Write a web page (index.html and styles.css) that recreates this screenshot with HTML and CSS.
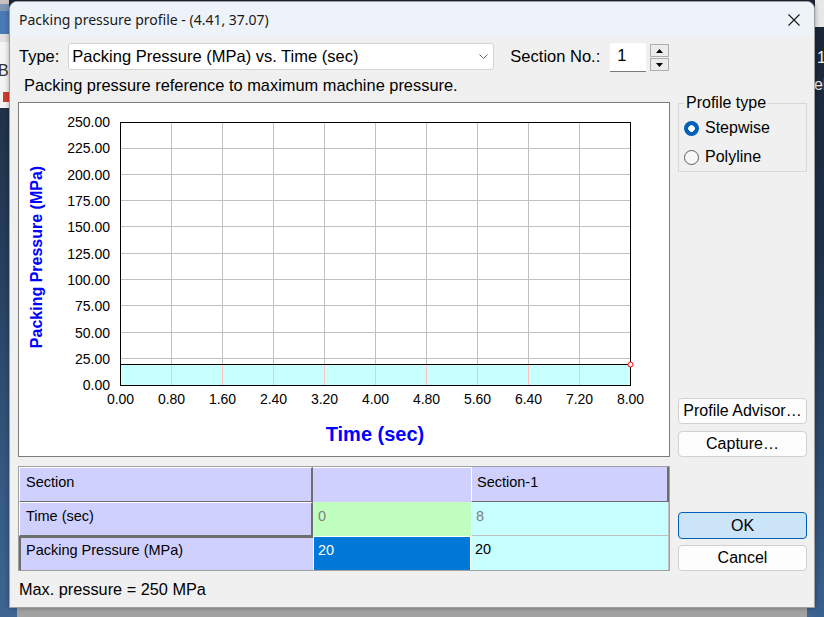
FILE: index.html
```html
<!DOCTYPE html>
<html>
<head>
<meta charset="utf-8">
<link rel="stylesheet" href="styles.css">
</head>
<body>
<div class="bg-lt"><span class="bg-lt-text">Bo</span><span class="bg-lt-red"></span></div>
<div class="bg-rt"><span class="bg-rt-a">1</span><span class="bg-rt-b">el</span></div>
<div class="bg-bt"></div>

<div class="dlg">
  <div class="titlebar">
    <span class="title">Packing pressure profile - (4.41, 37.07)</span>
    <svg class="close" width="12" height="12" viewBox="0 0 12 12"><path d="M0.5 0.5 L11.5 11.5 M11.5 0.5 L0.5 11.5" stroke="#1a1a1a" stroke-width="1.1" fill="none"/></svg>
  </div>
  <div class="body">
    <div class="typerow">
      <span class="lbl-type">Type:</span>
      <div class="combo">
        <span>Packing Pressure (MPa) vs. Time (sec)</span>
        <svg width="9" height="5" viewBox="0 0 9 5"><path d="M0.5 0.5 L4.5 4.5 L8.5 0.5" stroke="#606060" fill="none" stroke-width="1"/></svg>
      </div>
      <span class="lbl-sec">Section No.:</span>
      <div class="spin-input">1</div>
      <div class="spin-btns">
        <div class="spin-btn"><svg width="7" height="4" viewBox="0 0 7 4"><path d="M0 4 L3.5 0 L7 4 Z" fill="#000"/></svg></div>
        <div class="spin-btn"><svg width="7" height="4" viewBox="0 0 7 4"><path d="M0 0 L7 0 L3.5 4 Z" fill="#000"/></svg></div>
      </div>
    </div>
    <div class="desc">Packing pressure reference to maximum machine pressure.</div>
    <div class="main">
      <div class="left">
        <div class="chart">
          <svg width="650" height="353" viewBox="0 0 650 353" shape-rendering="crispEdges">
            <rect x="101" y="262" width="510" height="20" fill="#c8ffff"/>
            <g stroke="#c0c0c0" stroke-width="1">
              <line x1="152.5" y1="19" x2="152.5" y2="261"/>
              <line x1="203.5" y1="19" x2="203.5" y2="261"/>
              <line x1="254.5" y1="19" x2="254.5" y2="261"/>
              <line x1="305.5" y1="19" x2="305.5" y2="261"/>
              <line x1="356.5" y1="19" x2="356.5" y2="261"/>
              <line x1="407.5" y1="19" x2="407.5" y2="261"/>
              <line x1="458.5" y1="19" x2="458.5" y2="261"/>
              <line x1="509.5" y1="19" x2="509.5" y2="261"/>
              <line x1="560.5" y1="19" x2="560.5" y2="261"/>
              <line x1="101" y1="45.5" x2="611" y2="45.5"/>
              <line x1="101" y1="71.5" x2="611" y2="71.5"/>
              <line x1="101" y1="97.5" x2="611" y2="97.5"/>
              <line x1="101" y1="123.5" x2="611" y2="123.5"/>
              <line x1="101" y1="150.5" x2="611" y2="150.5"/>
              <line x1="101" y1="176.5" x2="611" y2="176.5"/>
              <line x1="101" y1="202.5" x2="611" y2="202.5"/>
              <line x1="101" y1="229.5" x2="611" y2="229.5"/>
              <line x1="101" y1="255.5" x2="611" y2="255.5"/>
            </g>
            <g stroke="#ffc0c0" stroke-width="1">
              <line x1="152.5" y1="262" x2="152.5" y2="282"/>
              <line x1="203.5" y1="262" x2="203.5" y2="282"/>
              <line x1="254.5" y1="262" x2="254.5" y2="282"/>
              <line x1="305.5" y1="262" x2="305.5" y2="282"/>
              <line x1="356.5" y1="262" x2="356.5" y2="282"/>
              <line x1="407.5" y1="262" x2="407.5" y2="282"/>
              <line x1="458.5" y1="262" x2="458.5" y2="282"/>
              <line x1="509.5" y1="262" x2="509.5" y2="282"/>
              <line x1="560.5" y1="262" x2="560.5" y2="282"/>
            </g>
            <line x1="101" y1="261.5" x2="612" y2="261.5" stroke="#000" stroke-width="1"/>
            <rect x="101.5" y="19.5" width="510" height="263" fill="none" stroke="#000" stroke-width="1"/>
            <circle cx="611.5" cy="261.5" r="2.5" fill="#fff" stroke="#ff0000" stroke-width="1" shape-rendering="auto"/>
            <g class="ax ylab" text-anchor="end">
              <text x="91" y="24">250.00</text>
              <text x="91" y="50">225.00</text>
              <text x="91" y="77">200.00</text>
              <text x="91" y="103">175.00</text>
              <text x="91" y="129">150.00</text>
              <text x="91" y="156">125.00</text>
              <text x="91" y="182">100.00</text>
              <text x="91" y="208">75.00</text>
              <text x="91" y="235">50.00</text>
              <text x="91" y="261">25.00</text>
              <text x="91" y="287">0.00</text>
            </g>
            <g class="ax xlab" text-anchor="middle">
              <text x="101.5" y="301">0.00</text>
              <text x="152.5" y="301">0.80</text>
              <text x="203.5" y="301">1.60</text>
              <text x="254.5" y="301">2.40</text>
              <text x="305.5" y="301">3.20</text>
              <text x="356.5" y="301">4.00</text>
              <text x="407.5" y="301">4.80</text>
              <text x="458.5" y="301">5.60</text>
              <text x="509.5" y="301">6.40</text>
              <text x="560.5" y="301">7.20</text>
              <text x="611.5" y="301">8.00</text>
            </g>
            <text class="ytitle" x="0" y="0" transform="translate(23 154) rotate(-90)" text-anchor="middle">Packing Pressure (MPa)</text>
            <text class="xtitle" x="356" y="338" text-anchor="middle">Time (sec)</text>
          </svg>
        </div>
        <div class="tbl">
          <div class="c hd c11">Section</div>
          <div class="c hd c12"></div>
          <div class="c hd c13">Section-1</div>
          <div class="c hd c21">Time (sec)</div>
          <div class="c c22">0</div>
          <div class="c c23">8</div>
          <div class="c hd c31">Packing Pressure (MPa)</div>
          <div class="c c32">20</div>
          <div class="c c33">20</div>
        </div>
        <div class="maxp">Max. pressure = 250 MPa</div>
      </div>
      <div class="right">
        <div class="grp">
          <div class="grp-title">Profile type</div>
          <div class="radio r1"><span class="rb on"></span><span>Stepwise</span></div>
          <div class="radio r2"><span class="rb"></span><span>Polyline</span></div>
        </div>
        <div class="btn b-adv">Profile Advisor…</div>
        <div class="btn b-cap">Capture…</div>
        <div class="btn b-ok">OK</div>
        <div class="btn b-cancel">Cancel</div>
      </div>
    </div>
  </div>
</div>
</body>
</html>
```

FILE: styles.css
```css
* { box-sizing: border-box; }
html, body { margin: 0; padding: 0; }
body {
  width: 824px;
  height: 617px;
  overflow: hidden;
  position: relative;
  font-family: "Liberation Sans", Arial, sans-serif;
  background: linear-gradient(to bottom, #1b2838 0%, #27405f 45%, #34577f 75%, #3e6592 100%);
}

/* desktop pieces behind the dialog */
.bg-lt {
  position: absolute; left: 0; top: 0; width: 9px; height: 108px; overflow: hidden;
  background: linear-gradient(to bottom, #cbbfbf 0, #cbbfbf 4px, #7d96b6 4px, #7d96b6 11px, #4a7ab3 11px, #4a7ab3 34px, #e2e2e2 34px, #e2e2e2 42px, #f4f4f4 42px, #f4f4f4 108px);
}
.bg-lt-text { position: absolute; left: -2px; top: 62px; font-size: 16px; color: #333; }
.bg-lt-red { position: absolute; left: 3px; top: 92px; width: 8px; height: 10px; background: #d23c2c; }
.bg-rt {
  position: absolute; left: 815px; top: 0; width: 9px; height: 617px;
  background: linear-gradient(to bottom, #e8e8e8 0, #e8e8e8 27px, #1a2737 27px, #1e3046 40%, #2f4f74 80%, #3a6290 100%);
}
.bg-rt-a { position: absolute; left: 2px; top: 49px; font-size: 16px; color: #f0f0f0; }
.bg-rt-b { position: absolute; left: -1px; top: 76px; font-size: 16px; color: #f0f0f0; }
.bg-bt { position: absolute; left: 17px; top: 608px; width: 790px; height: 9px; background: #a2a2a2; }

.dlg {
  position: absolute; left: 9px; top: 1px; width: 806px; height: 607px;
  background: #f0f0f0;
  border: 1px solid #9f9f9f;
  border-radius: 8px 8px 0 0;
  box-shadow: 0 0 5px rgba(0,0,0,0.35);
  overflow: hidden;
  display: flex; flex-direction: column;
}
.titlebar {
  height: 35px; flex: none;
  background: #eef2f9;
  display: flex; align-items: center; justify-content: space-between;
  padding: 0 14px 0 9px;
  font-family: "Noto Sans", "Open Sans", sans-serif;
  font-size: 14px;
  color: #1a1a1a;
}
.close { display: block; }

.body { padding: 6px 7px 0 8px; font-size: 16px; color: #000; }

.typerow { display: flex; align-items: flex-start; height: 29px; font-size: 16.5px; }
.lbl-type { margin-left: 1px; line-height: 27px; }
.combo {
  margin-left: 9px; width: 426px; height: 27px;
  background: #fff; border: 1px solid #d3d3d3; border-radius: 3px;
  display: flex; align-items: center; justify-content: space-between;
  padding: 0 5px 0 3px;
}
.combo svg { display: block; }
.lbl-sec { margin-left: 16px; line-height: 27px; }
.spin-input {
  margin-left: 10px; width: 36px; height: 29px;
  background: #fff; border-bottom: 1px solid #7a7a7a;
  padding-left: 7px; line-height: 25px;
}
.spin-btns { margin-left: 4px; margin-top: 1px; display: flex; flex-direction: column; gap: 1px; }
.spin-btn {
  width: 19px; height: 13px; border: 1px solid #adadad; background: #ececec;
  display: flex; align-items: center; justify-content: center;
}
.spin-btn svg { display: block; }

.desc { margin-top: 4px; line-height: 18px; padding-left: 6px; font-size: 16.4px; }

.main { display: flex; gap: 8px; margin-top: 8px; }
.left { width: 652px; flex: none; }
.chart { height: 355px; background: #fff; border: 1px solid #7b7b7b; }
.chart svg { display: block; }
.ax { font-family: "Liberation Sans", Arial, sans-serif; font-size: 14px; fill: #000; }
.ytitle { font-family: "Liberation Sans", Arial, sans-serif; font-size: 16px; font-weight: bold; fill: #0000ff; }
.xtitle { font-family: "Liberation Sans", Arial, sans-serif; font-size: 20px; font-weight: bold; fill: #0000ff; }

.tbl {
  margin-top: 9px;
  border: 1px solid #a0a0a0;
  display: grid;
  grid-template-columns: 294px 158px 198px;
  grid-template-rows: 35px 34px 34px;
  font-size: 14.5px;
  background: #fff;
}
.c { padding-left: 6px; line-height: 17px; white-space: nowrap; }
.hd { background: #d0d0ff; }
.c11 { border-top: 1px solid #fff; border-left: 1px solid #fff; border-right: 2px solid #6e6e6e; border-bottom: 1px solid #6e6e6e; padding-top: 6px; }
.c12 { border-top: 1px solid #fff; padding-top: 6px; }
.c13 { border-left: 1px solid #fff; border-right: 2px solid #6e6e6e; border-bottom: 1px solid #6e6e6e; padding-top: 7px; padding-left: 5px; }
.c21 { border-top: 1px solid #fff; border-left: 1px solid #fff; border-right: 2px solid #6e6e6e; border-bottom: 1px solid #6e6e6e; padding-top: 5px; }
.c22 { background: #c0ffc0; color: #808080; padding-top: 6px; padding-left: 5px; }
.c23 { background: #c8ffff; color: #808080; border-left: 1px solid #fff; border-right: 1px solid #c0c0c0; border-bottom: 1px solid #c0c0c0; padding-top: 6px; padding-left: 4px; }
.c31 { border-top: 2px solid #6e6e6e; border-left: 2px solid #6e6e6e; padding-top: 4px; padding-left: 5px; }
.c32 { background: #0078d7; color: #fff; border-top: 1px solid #fff; border-left: 1px solid #fff; border-right: 1px solid #fff; padding-top: 5px; padding-left: 4px; }
.c33 { background: #c8ffff; border-right: 1px solid #c0c0c0; padding-top: 5px; padding-left: 4px; }

.maxp { margin-top: 9px; line-height: 18px; padding-left: 1px; font-size: 16.3px; }

.right { width: 129px; flex: none; display: flex; flex-direction: column; }
.grp { margin-top: 1px; height: 69px; border: 1px solid #d8d8d8; padding-left: 5px; }
.grp-title { width: fit-content; margin-top: -10px; padding: 0 2px; background: #f0f0f0; line-height: 18px; }
.radio { display: flex; align-items: center; height: 18px; gap: 6px; }
.r1 { margin-top: 7px; }
.r2 { margin-top: 11px; }
.rb { width: 15px; height: 15px; border-radius: 50%; border: 1px solid #5c5c5c; background: #f7f7f7; flex: none; }
.rb.on { border: none; background: radial-gradient(circle, #ffffff 0, #ffffff 3px, #005fb8 3.6px); }

.btn {
  height: 26px; border: 1px solid #d0d0d0; border-radius: 4px; background: #fdfdfd;
  display: flex; align-items: center; justify-content: center; font-size: 16px;
}
.b-adv { margin-top: 226px; }
.b-cap { margin-top: 7px; }
.b-ok { margin-top: 55px; height: 27px; background: #cce4f7; border-color: #005fb8; }
.b-cancel { margin-top: 6px; }
```
